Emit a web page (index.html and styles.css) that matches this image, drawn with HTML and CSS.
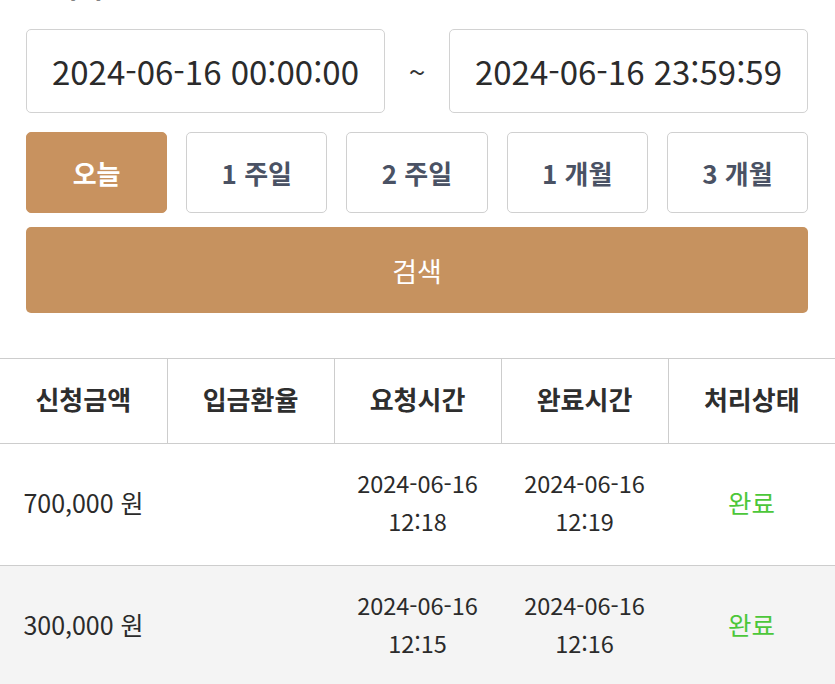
FILE: index.html
```html
<!DOCTYPE html>
<html lang="ko">
<head>
<meta charset="utf-8">
<link rel="stylesheet" href="styles.css">
</head>
<body>
<div class="filter">
  <h2 class="title">검색기간</h2>
  <div class="dates">
    <div class="date-box">2024-06-16 00:00:00</div>
    <span class="tilde">~</span>
    <div class="date-box">2024-06-16 23:59:59</div>
  </div>
  <div class="periods">
    <button class="period active">오늘</button>
    <button class="period">1 주일</button>
    <button class="period">2 주일</button>
    <button class="period">1 개월</button>
    <button class="period">3 개월</button>
  </div>
  <button class="search">검색</button>
</div>
<table class="list">
  <thead>
    <tr><th>신청금액</th><th>입금환율</th><th>요청시간</th><th>완료시간</th><th>처리상태</th></tr>
  </thead>
  <tbody>
    <tr>
      <td class="amount">700,000 원</td><td></td>
      <td>2024-06-16<br>12:18</td><td>2024-06-16<br>12:19</td>
      <td class="done">완료</td>
    </tr>
    <tr class="alt">
      <td class="amount">300,000 원</td><td></td>
      <td>2024-06-16<br>12:15</td><td>2024-06-16<br>12:16</td>
      <td class="done">완료</td>
    </tr>
  </tbody>
</table>
</body>
</html>
```

FILE: styles.css
```css
* { box-sizing: border-box; }
html, body { margin: 0; padding: 0; background: #fff; overflow: hidden; }
body { font-family: "Noto Sans CJK KR", "Noto Sans", sans-serif; color: #333; }

.filter { padding: 0 27px 0 26px; }
.title { margin: -32px 0 0; height: 36px; font-size: 28px; font-weight: 700; line-height: 36px; color: #222; }

.dates { display: flex; align-items: center; height: 84px; margin-top: 25px; }
.date-box {
  flex: 1; height: 84px; border: 1.5px solid #d2d2d2; border-radius: 5px;
  display: flex; align-items: center; justify-content: center;
  font-size: 33px; color: #2b2b2b;
}
.tilde { width: 64px; text-align: center; font-size: 30px; color: #333; }

.periods { display: grid; grid-template-columns: repeat(5, 1fr); gap: 19px; margin-top: 19px; }
.period {
  height: 81px; border: 1.5px solid #d0d0d0; border-radius: 5px; background: #fff;
  font-family: inherit; font-size: 26px; font-weight: 700; color: #4a5264; padding: 0;
}
.period.active { background: #c8925f; border-color: #c8925f; color: #fff; }

.search {
  display: block; width: 100%; height: 86px; margin-top: 14px; border: 0; border-radius: 5px;
  background: #c6925f; color: #fff; font-family: inherit; font-size: 27px; padding: 0;
}

.list { width: 100%; margin-top: 45px; border-collapse: collapse; table-layout: fixed; }
.list th {
  height: 85px; font-size: 26px; font-weight: 700; color: #2e2e2e; padding: 0 0 5px;
  border-top: 1.5px solid #cdcdcd; border-bottom: 1.5px solid #cdcdcd; border-left: 1.5px solid #cdcdcd;
}
.list th:first-child { border-left: 0; }
.list td {
  height: 122px; text-align: center; font-size: 23.5px; line-height: 38px; color: #2b2b2b;
  border-bottom: 1.5px solid #cdcdcd; padding: 0 0 5px;
}
.list td.amount { font-size: 25px; }
.list tr.alt td { background: #f4f4f4; }
.list td.done { color: #4cc73a; font-size: 25.5px; }
```
